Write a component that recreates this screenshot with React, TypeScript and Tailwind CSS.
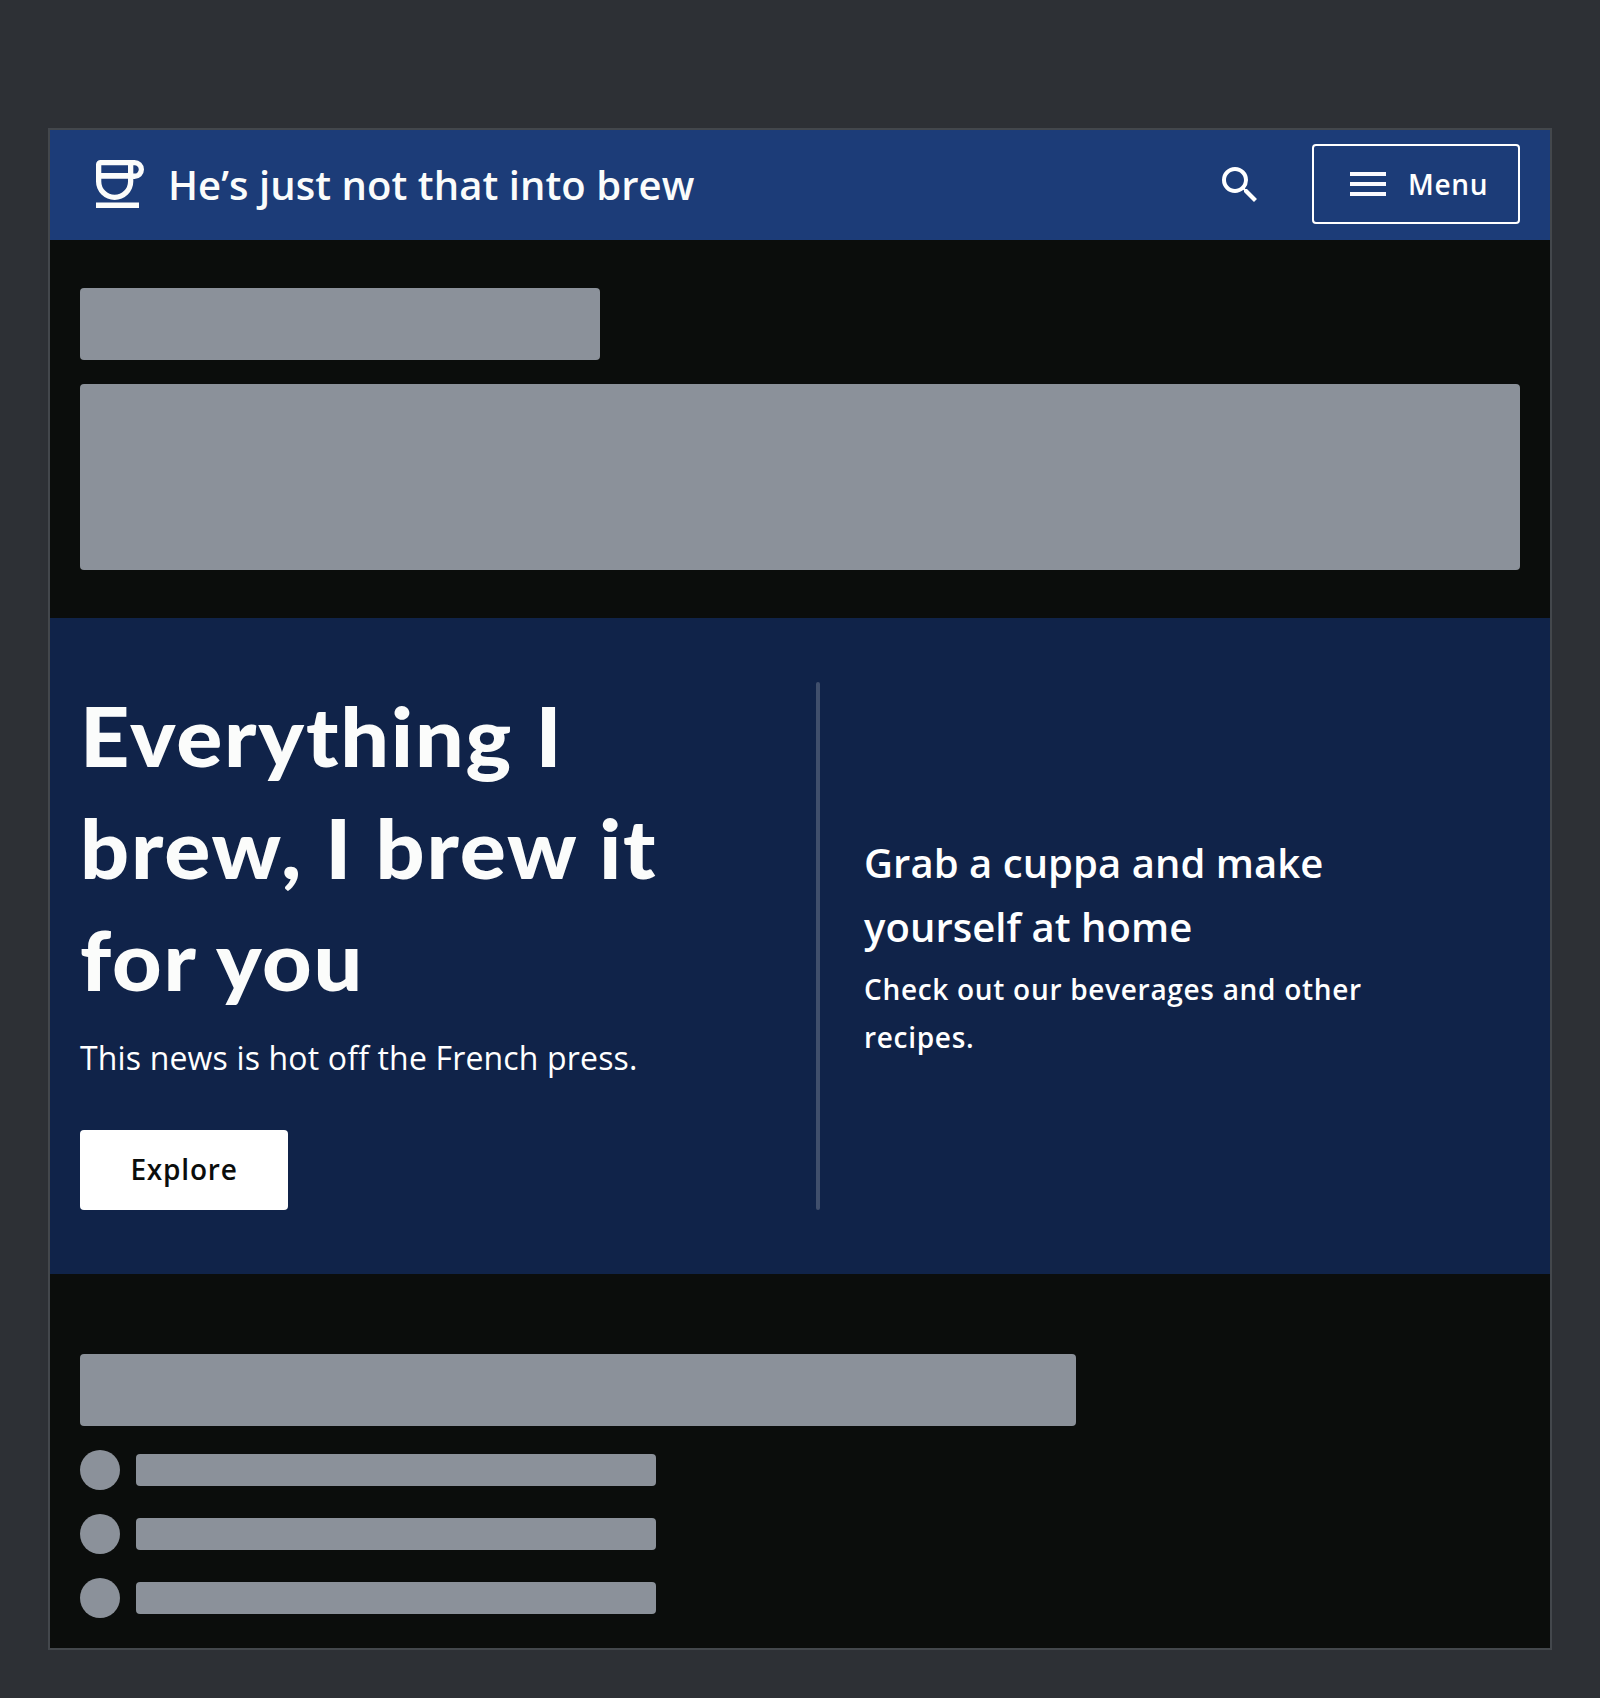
import React from "react";

function CupIcon() {
  return (
    <svg className="size-12 shrink-0" viewBox="0 0 48 48" fill="#fbfcfb">
      <path
        fillRule="evenodd"
        d="M4.5 0H38.5A9.5 9.5 0 0 1 38.5 19H37.3V21.5A18.65 18.5 0 0 1 0 21.5V4.5A4.5 4.5 0 0 1 4.5 0ZM5.3 5.3V13.1H32V5.3ZM37.3 5.3V13.6H38.6A4.15 4.15 0 0 0 38.6 5.3ZM5.3 18.8V21.4A13.35 13.3 0 0 0 32 21.4V18.8Z"
      />
      <path d="M0 42.4H43V48H0Z" />
    </svg>
  );
}

function SearchIcon() {
  return (
    <svg className="size-12 shrink-0" viewBox="0 0 24 24" fill="#ffffff">
      <path d="M15.5 14h-.79l-.28-.27A6.471 6.471 0 0 0 16 9.5 6.5 6.5 0 1 0 9.5 16c1.61 0 3.09-.59 4.23-1.57l.27.28v.79l5 4.99L20.49 19l-4.99-5zm-6 0C7.01 14 5 11.99 5 9.5S7.01 5 9.5 5 14 7.01 14 9.5 11.99 14 9.5 14z" />
    </svg>
  );
}

function MenuIcon() {
  return (
    <svg className="h-6 w-9 shrink-0" viewBox="0 0 36 24" fill="#fafaff">
      <path d="M0 0H36V4H0ZM0 10H36V14H0ZM0 20H36V24H0Z" />
    </svg>
  );
}

function Block({ className }: { className: string }) {
  return <div className={`rounded bg-[#8b919a] ${className}`} />;
}

export default function App() {
  return (
    <div className="h-[1698px] w-[1600px] bg-[#2d3035] px-12 pt-32 font-['Open_Sans',sans-serif] text-white">
      <div className="flex h-[1522px] flex-col border-2 border-[#43474c] bg-[#0b0d0c]">
        <header className="flex h-[110px] shrink-0 items-center bg-[#1c3c78] pr-[30px] pb-0.5 pl-[46px]">
          <CupIcon />
          <h2 className="mt-0.5 ml-6 text-[40px] leading-[64px] font-semibold tracking-[0.06px] text-[#fbfcfb]">
            He’s just not that into brew
          </h2>
          <button className="mt-px mr-12 ml-auto">
            <SearchIcon />
          </button>
          <button className="flex h-20 w-52 items-center rounded border-2 border-white pl-9">
            <MenuIcon />
            <span className="ml-[22px] text-[28px] leading-[48px] font-semibold tracking-[0.7px]">
              Menu
            </span>
          </button>
        </header>

        <section className="flex h-[378px] shrink-0 flex-col gap-6 px-[30px] pt-12">
          <Block className="h-[72px] w-[520px]" />
          <Block className="h-[186px]" />
        </section>

        <section className="flex h-[656px] shrink-0 bg-[#102349] px-[30px] py-16">
          <div className="flex w-[736px] flex-col items-start">
            <h1 className="-mt-[3px] mb-[19px] origin-left scale-x-105 text-[82px] leading-[112px] font-black tracking-[1.7px] whitespace-nowrap text-[#fbfcfb] font-['Lato',sans-serif]">
              Everything I
              <br />
              brew, I brew it
              <br />
              for you
            </h1>
            <p className="text-[32px] leading-[48px] tracking-[0.16px]">
              This news is hot off the French press.
            </p>
            <button className="mt-12 h-20 w-52 rounded bg-white pb-0.5 text-[28px] font-semibold tracking-[0.8px] text-[#0b0d0c]">
              Explore
            </button>
          </div>
          <div className="w-1 rounded-full bg-[#404f6c]" />
          <div className="ml-11 flex flex-col justify-center">
            <h3 className="text-[40px] leading-[64px] font-semibold tracking-[0.05px]">
              Grab a cuppa and make
              <br />
              yourself at home
            </h3>
            <p className="mt-1.5 text-[28px] leading-[48px] font-semibold tracking-[0.7px]">
              Check out our beverages and other
              <br />
              recipes.
            </p>
          </div>
        </section>

        <section className="px-[30px] pt-20">
          <Block className="h-[72px] w-[996px]" />
          <ul className="mt-6 flex flex-col gap-6">
            {[0, 1, 2].map((row) => (
              <li key={row} className="flex items-center gap-4">
                <div className="size-10 rounded-full bg-[#8b919a]" />
                <Block className="h-8 w-[520px]" />
              </li>
            ))}
          </ul>
        </section>
      </div>
    </div>
  );
}
